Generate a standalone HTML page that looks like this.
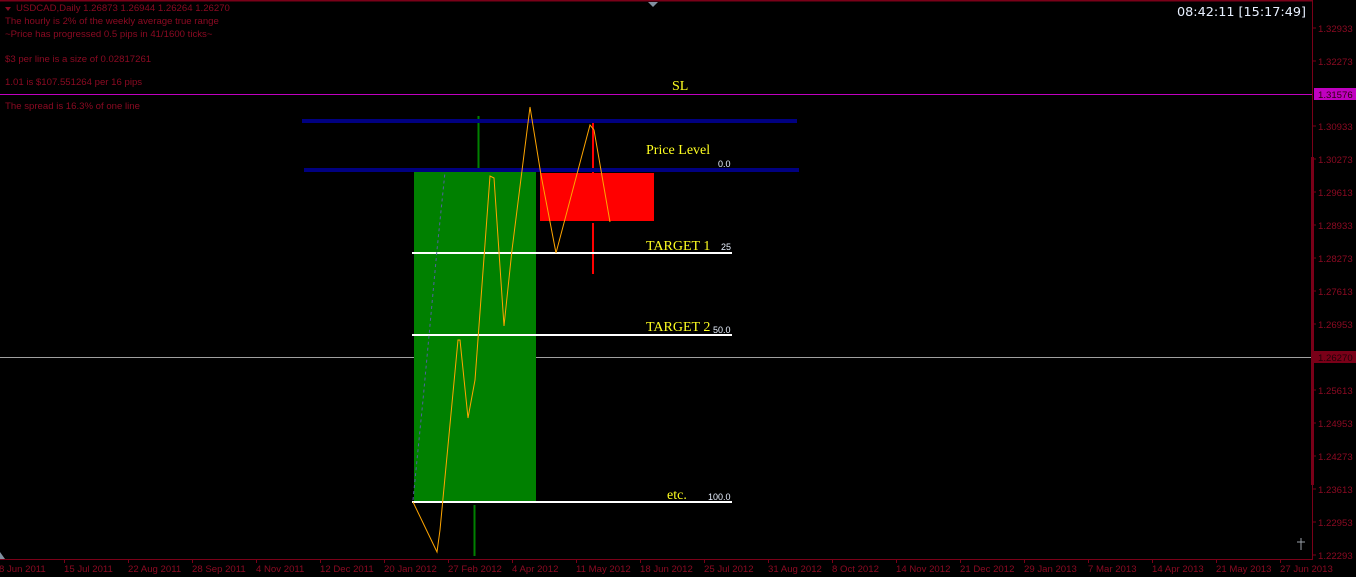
<!DOCTYPE html>
<html><head><meta charset="utf-8"><style>
html,body{margin:0;padding:0;background:#000;width:1356px;height:577px;overflow:hidden}
svg{display:block}
.t{font-family:"Liberation Sans",sans-serif;font-size:9.6px;fill:#8a0a22}
.ax{font-family:"Liberation Sans",sans-serif;font-size:9.6px;fill:#8a0a22}
.y{font-family:"Liberation Serif",serif;font-size:14px;fill:#ffff20}
.s{font-family:"Liberation Sans",sans-serif;font-size:9px;fill:#e8f0ff}
</style></head><body>
<svg width="1356" height="577" viewBox="0 0 1356 577" xmlns="http://www.w3.org/2000/svg">
<rect width="1356" height="577" fill="#000"/>
<line x1="0" y1="0.5" x2="1312" y2="0.5" stroke="#7a0018" stroke-width="2"/>
<polygon points="648,2 658,2 653,7" fill="#8090a0"/>
<polygon points="5,7 11,7 8,11" fill="#8a0a22"/>
<text class="t" x="16" y="11">USDCAD,Daily  1.26873 1.26944 1.26264 1.26270</text>
<text class="t" x="5" y="24">The hourly is 2% of the weekly average true range</text>
<text class="t" x="5" y="37">~Price has progressed  0.5  pips in 41/1600 ticks~</text>
<text class="t" x="5" y="62">$3 per line is a size of 0.02817261</text>
<text class="t" x="5" y="85">1.01 is $107.551264 per 16 pips</text>
<text class="t" x="5" y="109">The spread is 16.3% of one line</text>
<text x="1177" y="16" font-family="DejaVu Sans,Liberation Sans,sans-serif" font-size="12.8" fill="#e8f0ff">08:42:11 [15:17:49]</text>
<line x1="0" y1="94.5" x2="1312" y2="94.5" stroke="#c000c0" stroke-width="1"/>
<line x1="0" y1="357.5" x2="1312" y2="357.5" stroke="#a0a0a0" stroke-width="1"/>
<rect x="414" y="172" width="122" height="329" fill="#008000"/>
<rect x="540" y="173" width="114" height="48" fill="#ff0000"/>
<line x1="478.5" y1="116" x2="478.5" y2="170" stroke="#008000" stroke-width="2"/>
<line x1="474.5" y1="505" x2="474.5" y2="556" stroke="#008000" stroke-width="2"/>
<line x1="593" y1="123" x2="593" y2="173" stroke="#ff0000" stroke-width="2"/>
<line x1="593" y1="223" x2="593" y2="274" stroke="#ff0000" stroke-width="2"/>
<rect x="302" y="119" width="495" height="4" fill="#000080"/>
<rect x="304" y="168" width="495" height="4" fill="#000080"/>
<rect x="412" y="252" width="320" height="2" fill="#fff"/>
<rect x="412" y="334" width="320" height="2" fill="#fff"/>
<rect x="412" y="501" width="320" height="2" fill="#fff"/>
<polyline points="413,500 423,400 437,250 445,172" fill="none" stroke="#5060a0" stroke-width="1" stroke-dasharray="3,3"/>
<polyline points="413,502 437,552 440,530 458,340 460,340 468,418 475,380 490,176 494,178 504,326 512,250 530,107 541,175 556,253 590,125 594,130 610,222" fill="none" stroke="#ffa500" stroke-width="1"/>
<text class="y" x="672" y="90">SL</text>
<text class="y" x="646" y="154">Price Level</text>
<text class="y" x="646" y="250">TARGET 1</text>
<text class="y" x="646" y="331">TARGET 2</text>
<text class="y" x="667" y="499">etc.</text>
<text class="s" x="718" y="167">0.0</text>
<text class="s" x="721" y="250">25</text>
<text class="s" x="713" y="333">50.0</text>
<text class="s" x="708" y="500">100.0</text>
<line x1="1312.5" y1="0" x2="1312.5" y2="560" stroke="#7a0018" stroke-width="1"/>
<rect x="1311" y="157" width="3" height="328" fill="#7a0018"/>
<g stroke="#7a0018">
<line x1="1313" y1="28" x2="1316" y2="28"/><line x1="1313" y1="61" x2="1316" y2="61"/>
<line x1="1313" y1="126" x2="1316" y2="126"/><line x1="1313" y1="159" x2="1316" y2="159"/>
<line x1="1313" y1="192" x2="1316" y2="192"/><line x1="1313" y1="225" x2="1316" y2="225"/>
<line x1="1313" y1="258" x2="1316" y2="258"/><line x1="1313" y1="291" x2="1316" y2="291"/>
<line x1="1313" y1="324" x2="1316" y2="324"/><line x1="1313" y1="390" x2="1316" y2="390"/>
<line x1="1313" y1="423" x2="1316" y2="423"/><line x1="1313" y1="456" x2="1316" y2="456"/>
<line x1="1313" y1="489" x2="1316" y2="489"/><line x1="1313" y1="522" x2="1316" y2="522"/>
<line x1="1313" y1="555" x2="1316" y2="555"/>
</g>
<g class="ax">
<text x="1318" y="32">1.32933</text><text x="1318" y="65">1.32273</text>
<text x="1318" y="130">1.30933</text><text x="1318" y="163">1.30273</text>
<text x="1318" y="196">1.29613</text><text x="1318" y="229">1.28933</text>
<text x="1318" y="262">1.28273</text><text x="1318" y="295">1.27613</text>
<text x="1318" y="328">1.26953</text><text x="1318" y="394">1.25613</text>
<text x="1318" y="427">1.24953</text><text x="1318" y="460">1.24273</text>
<text x="1318" y="493">1.23613</text><text x="1318" y="526">1.22953</text>
<text x="1318" y="559">1.22293</text>
</g>
<rect x="1314" y="88" width="42" height="12" fill="#c000c0"/>
<text class="ax" x="1318" y="98" style="fill:#300010">1.31576</text>
<rect x="1314" y="351" width="42" height="12" fill="#7a0018"/>
<text class="ax" x="1318" y="361" style="fill:#200008">1.26270</text>
<g stroke="#9aa0a8" stroke-width="1"><line x1="1301" y1="538" x2="1301" y2="550"/><line x1="1297" y1="542" x2="1305" y2="542"/></g>
<polygon points="0,552 0,559 5,559" fill="#8090a0"/>
<line x1="0" y1="559.5" x2="1312" y2="559.5" stroke="#7a0018" stroke-width="1"/>
<g stroke="#7a0018">
<line x1="64.5" y1="560" x2="64.5" y2="563"/><line x1="128.5" y1="560" x2="128.5" y2="563"/><line x1="192.5" y1="560" x2="192.5" y2="563"/><line x1="256.5" y1="560" x2="256.5" y2="563"/><line x1="320.5" y1="560" x2="320.5" y2="563"/><line x1="384.5" y1="560" x2="384.5" y2="563"/><line x1="448.5" y1="560" x2="448.5" y2="563"/><line x1="512.5" y1="560" x2="512.5" y2="563"/><line x1="576.5" y1="560" x2="576.5" y2="563"/><line x1="640.5" y1="560" x2="640.5" y2="563"/><line x1="704.5" y1="560" x2="704.5" y2="563"/><line x1="768.5" y1="560" x2="768.5" y2="563"/><line x1="832.5" y1="560" x2="832.5" y2="563"/><line x1="896.5" y1="560" x2="896.5" y2="563"/><line x1="960.5" y1="560" x2="960.5" y2="563"/><line x1="1024.5" y1="560" x2="1024.5" y2="563"/><line x1="1088.5" y1="560" x2="1088.5" y2="563"/><line x1="1152.5" y1="560" x2="1152.5" y2="563"/><line x1="1216.5" y1="560" x2="1216.5" y2="563"/><line x1="1280.5" y1="560" x2="1280.5" y2="563"/>
</g>
<g class="ax">
<text x="-1" y="572">8 Jun 2011</text><text x="64" y="572">15 Jul 2011</text><text x="128" y="572">22 Aug 2011</text><text x="192" y="572">28 Sep 2011</text><text x="256" y="572">4 Nov 2011</text><text x="320" y="572">12 Dec 2011</text><text x="384" y="572">20 Jan 2012</text><text x="448" y="572">27 Feb 2012</text><text x="512" y="572">4 Apr 2012</text><text x="576" y="572">11 May 2012</text><text x="640" y="572">18 Jun 2012</text><text x="704" y="572">25 Jul 2012</text><text x="768" y="572">31 Aug 2012</text><text x="832" y="572">8 Oct 2012</text><text x="896" y="572">14 Nov 2012</text><text x="960" y="572">21 Dec 2012</text><text x="1024" y="572">29 Jan 2013</text><text x="1088" y="572">7 Mar 2013</text><text x="1152" y="572">14 Apr 2013</text><text x="1216" y="572">21 May 2013</text><text x="1280" y="572">27 Jun 2013</text>
</g>
</svg>
</body></html>
